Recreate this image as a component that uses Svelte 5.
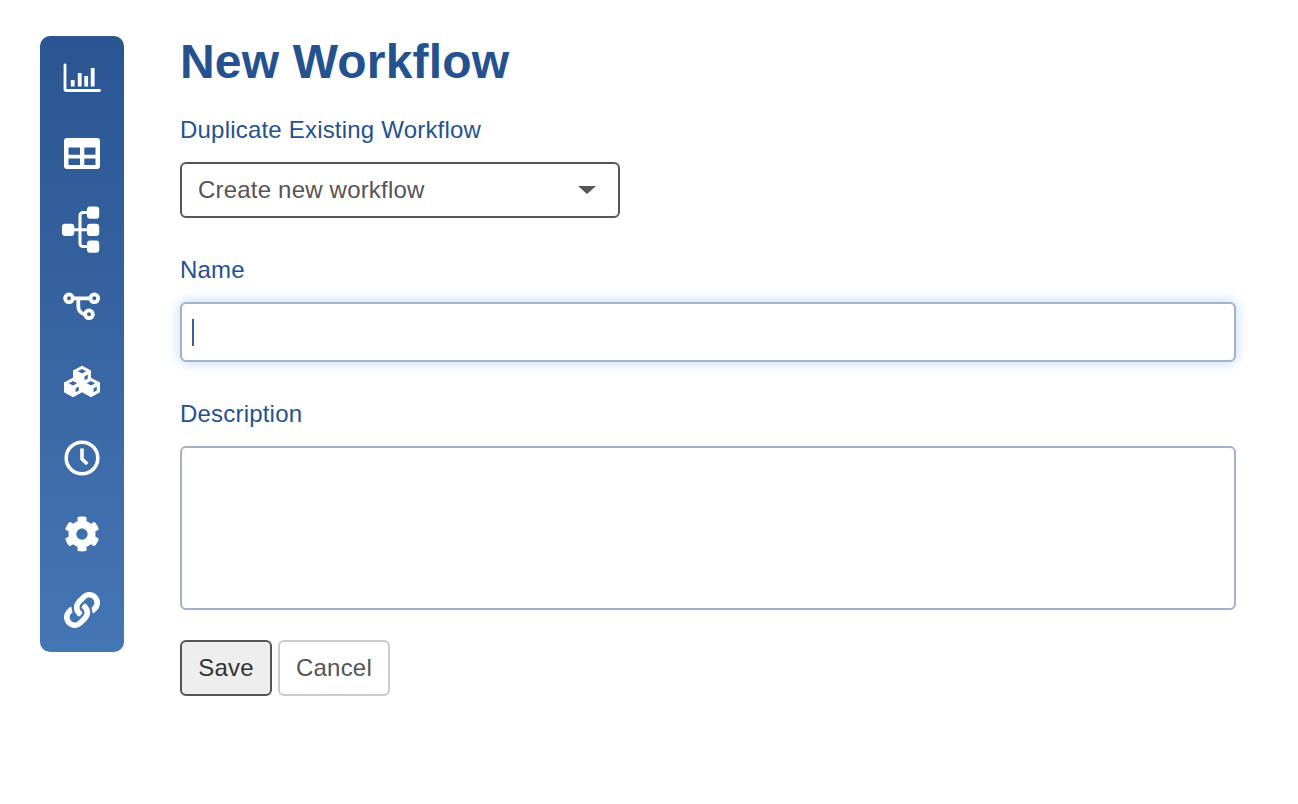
<script>
  const cube = "M0 -0.8 L9 3.8 V13.6 L0 18.6 L-9 13.6 V3.8 Z M0 2.4 L-4.2 4.6 L0 6.8 L4.2 4.6 Z M2.6 9.8 V13.6 L5.8 11.8 V8 Z";
</script>

<div class="page">
  <nav class="rail">
    <a href="#chart" class="item" aria-label="Dashboard">
      <svg class="ico" viewBox="-4 -4 48 48">
        <path d="M3 7V31.5a1 1 0 0 0 1 1H37.5" fill="none" stroke="#fff" stroke-width="2.8" stroke-linecap="round" />
        <path d="M8.8 22h3.8v6.4H8.8zM15.8 15h3.8v13.4h-3.8zM22.3 18h3.8v10.4h-3.8zM28.8 10h3.8v18.4h-3.8z" fill="#fff" />
      </svg>
    </a>
    <a href="#table" class="item" aria-label="Tables">
      <svg class="ico" viewBox="-4 -4 48 48">
        <path fill-rule="evenodd" fill="#fff" d="M5 4H35a3 3 0 0 1 3 3V32a3 3 0 0 1-3 3H5a3 3 0 0 1-3-3V7a3 3 0 0 1 3-3ZM6.5 13.5V20.8H18V13.5ZM22.3 13.5V20.8H33.5V13.5ZM6.5 24.5V31H18V24.5ZM22.3 24.5V31H33.5V24.5Z" />
      </svg>
    </a>
    <a href="#tree" class="item" aria-label="Hierarchy">
      <svg class="ico" viewBox="-4 -4 48 48">
        <g fill="#fff">
          <rect x="25" y="-3.5" width="12.2" height="12.2" rx="3" />
          <rect x="25" y="13.8" width="12.2" height="12.2" rx="3" />
          <rect x="25" y="30.5" width="12.2" height="12.2" rx="3" />
          <rect x="0" y="13.8" width="12.2" height="12.2" rx="3" />
        </g>
        <path d="M10 19.8H27M27 2.5H21a3 3 0 0 0-3 3V33.5a3 3 0 0 0 3 3H27" fill="none" stroke="#fff" stroke-width="3" />
      </svg>
    </a>
    <a href="#flow" class="item" aria-label="Workflows">
      <svg class="ico" viewBox="-4 -4 48 48">
        <g fill="none" stroke="#fff" stroke-width="3.8">
          <circle cx="7" cy="12.3" r="3.9" />
          <circle cx="32.3" cy="12.3" r="3.9" />
          <circle cx="27" cy="28.3" r="3.9" />
          <path d="M11 12.3H28.3M16.3 12.3V20.3a8 8 0 0 0 6.7 8" />
        </g>
      </svg>
    </a>
    <a href="#cubes" class="item" aria-label="Packages">
      <svg class="ico" viewBox="-4 -4 48 48">
        <g fill="#fff" fill-rule="evenodd">
          <path transform="translate(20 4.6)" d={cube} />
          <path transform="translate(11 16.6)" d={cube} />
          <path transform="translate(29 16.6)" d={cube} />
        </g>
      </svg>
    </a>
    <a href="#history" class="item" aria-label="History">
      <svg class="ico" viewBox="-4 -4 48 48">
        <circle cx="20" cy="20" r="15.8" fill="none" stroke="#fff" stroke-width="3.6" />
        <path d="M20 10.5V21L25.3 26" fill="none" stroke="#fff" stroke-width="3.6" stroke-linejoin="round" />
      </svg>
    </a>
    <a href="#settings" class="item" aria-label="Settings">
      <svg class="fa" viewBox="0 0 512 512">
        <path fill="#fff" d="M487.4 315.7l-42.6-24.6c4.3-23.2 4.3-47 0-70.2l42.6-24.6c4.9-2.8 7.1-8.6 5.5-14-11.1-35.6-30-67.8-54.7-94.6-3.8-4.1-10-5.1-14.8-2.3L380.8 110c-17.9-15.4-38.5-27.3-60.8-35.1V25.8c0-5.6-3.9-10.5-9.4-11.7-36.7-8.2-74.3-7.8-109.2 0-5.5 1.2-9.4 6.1-9.4 11.7V75c-22.2 7.9-42.8 19.8-60.8 35.1L88.7 85.5c-4.9-2.8-11-1.9-14.8 2.3-24.7 26.7-43.6 58.9-54.7 94.6-1.7 5.4.6 11.2 5.5 14L67.3 221c-4.3 23.2-4.3 47 0 70.2l-42.6 24.6c-4.9 2.8-7.1 8.6-5.5 14 11.1 35.6 30 67.8 54.7 94.6 3.8 4.1 10 5.1 14.8 2.3l42.6-24.6c17.9 15.4 38.5 27.3 60.8 35.1v49.2c0 5.6 3.9 10.5 9.4 11.7 36.7 8.2 74.3 7.8 109.2 0 5.5-1.2 9.4-6.1 9.4-11.7v-49.2c22.2-7.9 42.8-19.8 60.8-35.1l42.6 24.6c4.9 2.8 11 1.9 14.8-2.3 24.7-26.7 43.6-58.9 54.7-94.6 1.5-5.5-.7-11.3-5.6-14.1zM256 336c-44.1 0-80-35.9-80-80s35.9-80 80-80 80 35.9 80 80-35.9 80-80 80z" />
      </svg>
    </a>
    <a href="#links" class="item" aria-label="Links">
      <svg class="fa" viewBox="0 0 512 512">
        <path fill="#fff" d="M326.612 185.391c59.747 59.809 58.927 155.698.36 214.59-.11.12-.24.25-.36.37l-67.2 67.2c-59.27 59.27-155.699 59.262-214.96 0-59.27-59.26-59.27-155.7 0-214.96l37.106-37.106c9.84-9.84 26.786-3.3 27.294 10.606.648 17.722 3.826 35.527 9.69 52.721 1.986 5.822.567 12.262-3.783 16.612l-13.087 13.087c-28.026 28.026-28.905 73.66-1.155 101.96 28.024 28.579 74.086 28.749 102.325.51l67.2-67.19c28.191-28.191 28.073-73.757 0-101.83-3.701-3.694-7.429-6.564-10.341-8.569a16.037 16.037 0 0 1-6.947-12.606c-.396-10.567 3.348-21.456 11.698-29.806l21.054-21.055c5.521-5.521 14.182-6.199 20.584-1.731a152.482 152.482 0 0 1 20.522 17.197zM467.547 44.449c-59.261-59.262-155.69-59.27-214.96 0l-67.2 67.2c-.12.12-.25.25-.36.37-58.566 58.892-59.387 154.781.36 214.59a152.454 152.454 0 0 0 20.521 17.196c6.402 4.468 15.064 3.789 20.584-1.731l21.054-21.055c8.35-8.35 12.094-19.239 11.698-29.806a16.037 16.037 0 0 0-6.947-12.606c-2.912-2.005-6.64-4.875-10.341-8.569-28.073-28.073-28.191-73.639 0-101.83l67.2-67.19c28.239-28.239 74.3-28.069 102.325.51 27.75 28.3 26.872 73.934-1.155 101.96l-13.087 13.087c-4.35 4.35-5.769 10.79-3.783 16.612 5.864 17.194 9.042 34.999 9.69 52.721.509 13.906 17.454 20.446 27.294 10.606l37.106-37.106c59.271-59.259 59.271-155.699.001-214.959z" />
      </svg>
    </a>
  </nav>

  <main class="content">
    <h1>New Workflow</h1>

    <label class="lbl first" for="dup">Duplicate Existing Workflow</label>
    <div class="select-wrap">
      <select id="dup" class="select">
        <option>Create new workflow</option>
      </select>
      <span class="tri"></span>
    </div>

    <label class="lbl" for="name">Name</label>
    <div class="input-wrap">
      <input id="name" class="field name" type="text" />
      <span class="cursor"></span>
    </div>

    <label class="lbl" for="description">Description</label>
    <textarea id="description" class="field area"></textarea>

    <div class="actions">
      <button class="btn save" type="button">Save</button>
      <button class="btn cancel" type="button">Cancel</button>
    </div>
  </main>
</div>

<style>
  :global(body) {
    margin: 0;
    background: #fff;
    font-family: "Liberation Sans", Arial, sans-serif;
  }
  .page {
    display: flex;
    align-items: flex-start;
    gap: 56px;
    padding: 36px 62px 0 40px;
    box-sizing: border-box;
    min-height: 804px;
  }
  .rail {
    flex: none;
    width: 84px;
    box-sizing: border-box;
    padding: 4px 0;
    display: flex;
    flex-direction: column;
    border-radius: 10px;
    background: linear-gradient(180deg, #2a5591 0%, #4576b4 100%);
  }
  .item {
    height: 76px;
    display: flex;
    align-items: center;
    justify-content: center;
  }
  .ico {
    width: 48px;
    height: 48px;
    display: block;
    overflow: visible;
  }
  .fa {
    width: 36px;
    height: 36px;
    display: block;
  }
  .content {
    flex: 1;
    min-width: 0;
  }
  h1 {
    margin: 0;
    font-size: 48px;
    line-height: 52px;
    font-weight: 700;
    letter-spacing: 0.17px;
    color: #24528f;
  }
  .lbl {
    display: block;
    font-size: 24px;
    line-height: 28px;
    letter-spacing: 0.2px;
    color: #24528f;
    margin-top: 38px;
    margin-bottom: 18px;
  }
  .lbl.first {
    margin-top: 28px;
    margin-bottom: 18px;
  }
  .select-wrap {
    position: relative;
    width: 440px;
  }
  .select {
    appearance: none;
    display: block;
    width: 100%;
    height: 56px;
    box-sizing: border-box;
    padding: 0 16px 2px;
    border: 2px solid #555;
    border-radius: 6px;
    background: #fff;
    color: #555;
    font: 24px "Liberation Sans", Arial, sans-serif;
    letter-spacing: 0.2px;
  }
  .tri {
    position: absolute;
    right: 24px;
    top: 24px;
    width: 0;
    height: 0;
    border-left: 9px solid transparent;
    border-right: 9px solid transparent;
    border-top: 8px solid #555;
    pointer-events: none;
  }
  .input-wrap {
    position: relative;
  }
  .field {
    display: block;
    width: 100%;
    box-sizing: border-box;
    border: 2px solid #a3b2c6;
    border-radius: 6px;
    background: #fff;
    outline: none;
    font: 24px "Liberation Sans", Arial, sans-serif;
    color: #333;
  }
  .name {
    height: 60px;
    padding: 0 10px;
    box-shadow: 0 0 14px rgba(90, 155, 235, 0.4);
  }
  .cursor {
    position: absolute;
    left: 12px;
    top: 17px;
    width: 2px;
    height: 27px;
    background: #3a5f9e;
  }
  .area {
    height: 164px;
    padding: 10px;
    resize: none;
  }
  .actions {
    display: flex;
    gap: 6px;
    margin-top: 30px;
  }
  .btn {
    height: 56px;
    box-sizing: border-box;
    border-radius: 6px;
    font: 24px "Liberation Sans", Arial, sans-serif;
    letter-spacing: 0.2px;
    padding: 0;
  }
  .save {
    width: 92px;
    border: 2px solid #555;
    background: #eee;
    color: #333;
  }
  .cancel {
    width: 112px;
    border: 2px solid #ccc;
    background: #fff;
    color: #555;
  }
</style>
